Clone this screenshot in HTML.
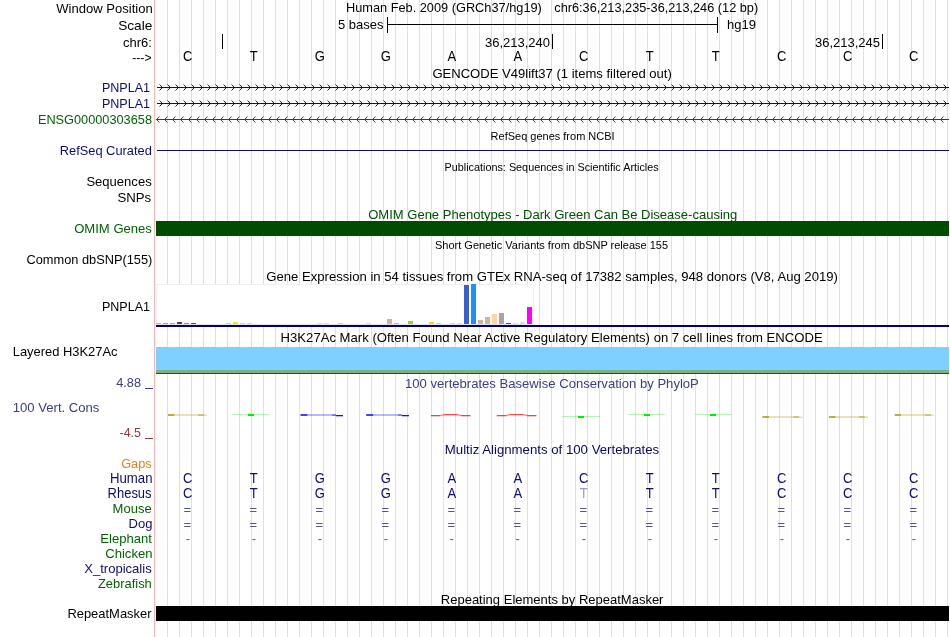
<!DOCTYPE html>
<html><head><meta charset="utf-8"><style>
html,body{margin:0;padding:0;background:#fff;width:950px;height:637px;overflow:hidden}
svg{display:block;will-change:transform;font-family:"Liberation Sans",sans-serif}
</style></head><body>
<svg width="950" height="637" viewBox="0 0 950 637">
<rect x="167" y="0" width="1" height="637" fill="#dcdcff"/>
<rect x="179" y="0" width="1" height="637" fill="#dcdcff"/>
<rect x="191" y="0" width="1" height="637" fill="#dcdcff"/>
<rect x="203" y="0" width="1" height="637" fill="#dcdcff"/>
<rect x="215" y="0" width="1" height="637" fill="#dcdcff"/>
<rect x="227" y="0" width="1" height="637" fill="#dcdcff"/>
<rect x="239" y="0" width="1" height="637" fill="#dcdcff"/>
<rect x="251" y="0" width="1" height="637" fill="#dcdcff"/>
<rect x="263" y="0" width="1" height="637" fill="#dcdcff"/>
<rect x="275" y="0" width="1" height="637" fill="#dcdcff"/>
<rect x="287" y="0" width="1" height="637" fill="#dcdcff"/>
<rect x="299" y="0" width="1" height="637" fill="#dcdcff"/>
<rect x="311" y="0" width="1" height="637" fill="#dcdcff"/>
<rect x="323" y="0" width="1" height="637" fill="#dcdcff"/>
<rect x="335" y="0" width="1" height="637" fill="#dcdcff"/>
<rect x="347" y="0" width="1" height="637" fill="#dcdcff"/>
<rect x="359" y="0" width="1" height="637" fill="#dcdcff"/>
<rect x="371" y="0" width="1" height="637" fill="#dcdcff"/>
<rect x="383" y="0" width="1" height="637" fill="#dcdcff"/>
<rect x="395" y="0" width="1" height="637" fill="#dcdcff"/>
<rect x="407" y="0" width="1" height="637" fill="#dcdcff"/>
<rect x="419" y="0" width="1" height="637" fill="#dcdcff"/>
<rect x="431" y="0" width="1" height="637" fill="#dcdcff"/>
<rect x="443" y="0" width="1" height="637" fill="#dcdcff"/>
<rect x="455" y="0" width="1" height="637" fill="#dcdcff"/>
<rect x="467" y="0" width="1" height="637" fill="#dcdcff"/>
<rect x="479" y="0" width="1" height="637" fill="#dcdcff"/>
<rect x="491" y="0" width="1" height="637" fill="#dcdcff"/>
<rect x="503" y="0" width="1" height="637" fill="#dcdcff"/>
<rect x="515" y="0" width="1" height="637" fill="#dcdcff"/>
<rect x="527" y="0" width="1" height="637" fill="#dcdcff"/>
<rect x="539" y="0" width="1" height="637" fill="#dcdcff"/>
<rect x="551" y="0" width="1" height="637" fill="#dcdcff"/>
<rect x="563" y="0" width="1" height="637" fill="#dcdcff"/>
<rect x="575" y="0" width="1" height="637" fill="#dcdcff"/>
<rect x="587" y="0" width="1" height="637" fill="#dcdcff"/>
<rect x="599" y="0" width="1" height="637" fill="#dcdcff"/>
<rect x="611" y="0" width="1" height="637" fill="#dcdcff"/>
<rect x="623" y="0" width="1" height="637" fill="#dcdcff"/>
<rect x="635" y="0" width="1" height="637" fill="#dcdcff"/>
<rect x="647" y="0" width="1" height="637" fill="#dcdcff"/>
<rect x="659" y="0" width="1" height="637" fill="#dcdcff"/>
<rect x="671" y="0" width="1" height="637" fill="#dcdcff"/>
<rect x="683" y="0" width="1" height="637" fill="#dcdcff"/>
<rect x="695" y="0" width="1" height="637" fill="#dcdcff"/>
<rect x="707" y="0" width="1" height="637" fill="#dcdcff"/>
<rect x="719" y="0" width="1" height="637" fill="#dcdcff"/>
<rect x="731" y="0" width="1" height="637" fill="#dcdcff"/>
<rect x="743" y="0" width="1" height="637" fill="#dcdcff"/>
<rect x="755" y="0" width="1" height="637" fill="#dcdcff"/>
<rect x="767" y="0" width="1" height="637" fill="#dcdcff"/>
<rect x="779" y="0" width="1" height="637" fill="#dcdcff"/>
<rect x="791" y="0" width="1" height="637" fill="#dcdcff"/>
<rect x="803" y="0" width="1" height="637" fill="#dcdcff"/>
<rect x="815" y="0" width="1" height="637" fill="#dcdcff"/>
<rect x="827" y="0" width="1" height="637" fill="#dcdcff"/>
<rect x="839" y="0" width="1" height="637" fill="#dcdcff"/>
<rect x="851" y="0" width="1" height="637" fill="#dcdcff"/>
<rect x="863" y="0" width="1" height="637" fill="#dcdcff"/>
<rect x="875" y="0" width="1" height="637" fill="#dcdcff"/>
<rect x="887" y="0" width="1" height="637" fill="#dcdcff"/>
<rect x="899" y="0" width="1" height="637" fill="#dcdcff"/>
<rect x="911" y="0" width="1" height="637" fill="#dcdcff"/>
<rect x="923" y="0" width="1" height="637" fill="#dcdcff"/>
<rect x="935" y="0" width="1" height="637" fill="#dcdcff"/>
<rect x="947" y="0" width="1" height="637" fill="#dcdcff"/>
<rect x="154" y="0" width="1" height="637" fill="#ffb4b4"/>
<rect x="145" y="388" width="8" height="1" fill="rgb(60,60,140)"/>
<rect x="145" y="438" width="8" height="1" fill="rgb(140,60,60)"/>
<text x="338" y="29" fill="#000" font-size="13" text-anchor="start">5 bases</text>
<rect x="387" y="17" width="1" height="16" fill="#000"/>
<rect x="387" y="24" width="331" height="1" fill="#000"/>
<rect x="717" y="17" width="1" height="16" fill="#000"/>
<text x="727" y="29" fill="#000" font-size="13" text-anchor="start">hg19</text>
<rect x="222" y="34" width="1" height="15" fill="#000"/>
<rect x="552" y="34" width="1" height="15" fill="#000"/>
<rect x="882" y="34" width="1" height="15" fill="#000"/>
<text x="550" y="47" fill="#000" font-size="13" text-anchor="end">36,213,240</text>
<text x="880" y="47" fill="#000" font-size="13" text-anchor="end">36,213,245</text>
<text x="187.8" y="61" fill="#000" font-size="13" text-anchor="middle" transform="matrix(1,0,0,1.1,0,-6.100)">C</text>
<text x="253.8" y="61" fill="#000" font-size="13" text-anchor="middle" transform="matrix(1,0,0,1.1,0,-6.100)">T</text>
<text x="319.8" y="61" fill="#000" font-size="13" text-anchor="middle" transform="matrix(1,0,0,1.1,0,-6.100)">G</text>
<text x="385.8" y="61" fill="#000" font-size="13" text-anchor="middle" transform="matrix(1,0,0,1.1,0,-6.100)">G</text>
<text x="451.8" y="61" fill="#000" font-size="13" text-anchor="middle" transform="matrix(1,0,0,1.1,0,-6.100)">A</text>
<text x="517.8" y="61" fill="#000" font-size="13" text-anchor="middle" transform="matrix(1,0,0,1.1,0,-6.100)">A</text>
<text x="583.8" y="61" fill="#000" font-size="13" text-anchor="middle" transform="matrix(1,0,0,1.1,0,-6.100)">C</text>
<text x="649.8" y="61" fill="#000" font-size="13" text-anchor="middle" transform="matrix(1,0,0,1.1,0,-6.100)">T</text>
<text x="715.8" y="61" fill="#000" font-size="13" text-anchor="middle" transform="matrix(1,0,0,1.1,0,-6.100)">T</text>
<text x="781.8" y="61" fill="#000" font-size="13" text-anchor="middle" transform="matrix(1,0,0,1.1,0,-6.100)">C</text>
<text x="847.8" y="61" fill="#000" font-size="13" text-anchor="middle" transform="matrix(1,0,0,1.1,0,-6.100)">C</text>
<text x="913.8" y="61" fill="#000" font-size="13" text-anchor="middle" transform="matrix(1,0,0,1.1,0,-6.100)">C</text>
<rect x="157" y="87" width="792" height="1" fill="rgb(12,12,120)"/>
<path d="M161,86h1v1h-1zM160,85h1v1h-1zM161,88h1v1h-1zM160,89h1v1h-1zM169,86h1v1h-1zM168,85h1v1h-1zM169,88h1v1h-1zM168,89h1v1h-1zM177,86h1v1h-1zM176,85h1v1h-1zM177,88h1v1h-1zM176,89h1v1h-1zM185,86h1v1h-1zM184,85h1v1h-1zM185,88h1v1h-1zM184,89h1v1h-1zM193,86h1v1h-1zM192,85h1v1h-1zM193,88h1v1h-1zM192,89h1v1h-1zM201,86h1v1h-1zM200,85h1v1h-1zM201,88h1v1h-1zM200,89h1v1h-1zM209,86h1v1h-1zM208,85h1v1h-1zM209,88h1v1h-1zM208,89h1v1h-1zM217,86h1v1h-1zM216,85h1v1h-1zM217,88h1v1h-1zM216,89h1v1h-1zM225,86h1v1h-1zM224,85h1v1h-1zM225,88h1v1h-1zM224,89h1v1h-1zM233,86h1v1h-1zM232,85h1v1h-1zM233,88h1v1h-1zM232,89h1v1h-1zM241,86h1v1h-1zM240,85h1v1h-1zM241,88h1v1h-1zM240,89h1v1h-1zM249,86h1v1h-1zM248,85h1v1h-1zM249,88h1v1h-1zM248,89h1v1h-1zM257,86h1v1h-1zM256,85h1v1h-1zM257,88h1v1h-1zM256,89h1v1h-1zM265,86h1v1h-1zM264,85h1v1h-1zM265,88h1v1h-1zM264,89h1v1h-1zM273,86h1v1h-1zM272,85h1v1h-1zM273,88h1v1h-1zM272,89h1v1h-1zM281,86h1v1h-1zM280,85h1v1h-1zM281,88h1v1h-1zM280,89h1v1h-1zM289,86h1v1h-1zM288,85h1v1h-1zM289,88h1v1h-1zM288,89h1v1h-1zM297,86h1v1h-1zM296,85h1v1h-1zM297,88h1v1h-1zM296,89h1v1h-1zM305,86h1v1h-1zM304,85h1v1h-1zM305,88h1v1h-1zM304,89h1v1h-1zM313,86h1v1h-1zM312,85h1v1h-1zM313,88h1v1h-1zM312,89h1v1h-1zM321,86h1v1h-1zM320,85h1v1h-1zM321,88h1v1h-1zM320,89h1v1h-1zM329,86h1v1h-1zM328,85h1v1h-1zM329,88h1v1h-1zM328,89h1v1h-1zM337,86h1v1h-1zM336,85h1v1h-1zM337,88h1v1h-1zM336,89h1v1h-1zM345,86h1v1h-1zM344,85h1v1h-1zM345,88h1v1h-1zM344,89h1v1h-1zM353,86h1v1h-1zM352,85h1v1h-1zM353,88h1v1h-1zM352,89h1v1h-1zM361,86h1v1h-1zM360,85h1v1h-1zM361,88h1v1h-1zM360,89h1v1h-1zM369,86h1v1h-1zM368,85h1v1h-1zM369,88h1v1h-1zM368,89h1v1h-1zM377,86h1v1h-1zM376,85h1v1h-1zM377,88h1v1h-1zM376,89h1v1h-1zM385,86h1v1h-1zM384,85h1v1h-1zM385,88h1v1h-1zM384,89h1v1h-1zM393,86h1v1h-1zM392,85h1v1h-1zM393,88h1v1h-1zM392,89h1v1h-1zM401,86h1v1h-1zM400,85h1v1h-1zM401,88h1v1h-1zM400,89h1v1h-1zM409,86h1v1h-1zM408,85h1v1h-1zM409,88h1v1h-1zM408,89h1v1h-1zM417,86h1v1h-1zM416,85h1v1h-1zM417,88h1v1h-1zM416,89h1v1h-1zM425,86h1v1h-1zM424,85h1v1h-1zM425,88h1v1h-1zM424,89h1v1h-1zM433,86h1v1h-1zM432,85h1v1h-1zM433,88h1v1h-1zM432,89h1v1h-1zM441,86h1v1h-1zM440,85h1v1h-1zM441,88h1v1h-1zM440,89h1v1h-1zM449,86h1v1h-1zM448,85h1v1h-1zM449,88h1v1h-1zM448,89h1v1h-1zM457,86h1v1h-1zM456,85h1v1h-1zM457,88h1v1h-1zM456,89h1v1h-1zM465,86h1v1h-1zM464,85h1v1h-1zM465,88h1v1h-1zM464,89h1v1h-1zM473,86h1v1h-1zM472,85h1v1h-1zM473,88h1v1h-1zM472,89h1v1h-1zM481,86h1v1h-1zM480,85h1v1h-1zM481,88h1v1h-1zM480,89h1v1h-1zM489,86h1v1h-1zM488,85h1v1h-1zM489,88h1v1h-1zM488,89h1v1h-1zM497,86h1v1h-1zM496,85h1v1h-1zM497,88h1v1h-1zM496,89h1v1h-1zM505,86h1v1h-1zM504,85h1v1h-1zM505,88h1v1h-1zM504,89h1v1h-1zM513,86h1v1h-1zM512,85h1v1h-1zM513,88h1v1h-1zM512,89h1v1h-1zM521,86h1v1h-1zM520,85h1v1h-1zM521,88h1v1h-1zM520,89h1v1h-1zM529,86h1v1h-1zM528,85h1v1h-1zM529,88h1v1h-1zM528,89h1v1h-1zM537,86h1v1h-1zM536,85h1v1h-1zM537,88h1v1h-1zM536,89h1v1h-1zM545,86h1v1h-1zM544,85h1v1h-1zM545,88h1v1h-1zM544,89h1v1h-1zM553,86h1v1h-1zM552,85h1v1h-1zM553,88h1v1h-1zM552,89h1v1h-1zM561,86h1v1h-1zM560,85h1v1h-1zM561,88h1v1h-1zM560,89h1v1h-1zM569,86h1v1h-1zM568,85h1v1h-1zM569,88h1v1h-1zM568,89h1v1h-1zM577,86h1v1h-1zM576,85h1v1h-1zM577,88h1v1h-1zM576,89h1v1h-1zM585,86h1v1h-1zM584,85h1v1h-1zM585,88h1v1h-1zM584,89h1v1h-1zM593,86h1v1h-1zM592,85h1v1h-1zM593,88h1v1h-1zM592,89h1v1h-1zM601,86h1v1h-1zM600,85h1v1h-1zM601,88h1v1h-1zM600,89h1v1h-1zM609,86h1v1h-1zM608,85h1v1h-1zM609,88h1v1h-1zM608,89h1v1h-1zM617,86h1v1h-1zM616,85h1v1h-1zM617,88h1v1h-1zM616,89h1v1h-1zM625,86h1v1h-1zM624,85h1v1h-1zM625,88h1v1h-1zM624,89h1v1h-1zM633,86h1v1h-1zM632,85h1v1h-1zM633,88h1v1h-1zM632,89h1v1h-1zM641,86h1v1h-1zM640,85h1v1h-1zM641,88h1v1h-1zM640,89h1v1h-1zM649,86h1v1h-1zM648,85h1v1h-1zM649,88h1v1h-1zM648,89h1v1h-1zM657,86h1v1h-1zM656,85h1v1h-1zM657,88h1v1h-1zM656,89h1v1h-1zM665,86h1v1h-1zM664,85h1v1h-1zM665,88h1v1h-1zM664,89h1v1h-1zM673,86h1v1h-1zM672,85h1v1h-1zM673,88h1v1h-1zM672,89h1v1h-1zM681,86h1v1h-1zM680,85h1v1h-1zM681,88h1v1h-1zM680,89h1v1h-1zM689,86h1v1h-1zM688,85h1v1h-1zM689,88h1v1h-1zM688,89h1v1h-1zM697,86h1v1h-1zM696,85h1v1h-1zM697,88h1v1h-1zM696,89h1v1h-1zM705,86h1v1h-1zM704,85h1v1h-1zM705,88h1v1h-1zM704,89h1v1h-1zM713,86h1v1h-1zM712,85h1v1h-1zM713,88h1v1h-1zM712,89h1v1h-1zM721,86h1v1h-1zM720,85h1v1h-1zM721,88h1v1h-1zM720,89h1v1h-1zM729,86h1v1h-1zM728,85h1v1h-1zM729,88h1v1h-1zM728,89h1v1h-1zM737,86h1v1h-1zM736,85h1v1h-1zM737,88h1v1h-1zM736,89h1v1h-1zM745,86h1v1h-1zM744,85h1v1h-1zM745,88h1v1h-1zM744,89h1v1h-1zM753,86h1v1h-1zM752,85h1v1h-1zM753,88h1v1h-1zM752,89h1v1h-1zM761,86h1v1h-1zM760,85h1v1h-1zM761,88h1v1h-1zM760,89h1v1h-1zM769,86h1v1h-1zM768,85h1v1h-1zM769,88h1v1h-1zM768,89h1v1h-1zM777,86h1v1h-1zM776,85h1v1h-1zM777,88h1v1h-1zM776,89h1v1h-1zM785,86h1v1h-1zM784,85h1v1h-1zM785,88h1v1h-1zM784,89h1v1h-1zM793,86h1v1h-1zM792,85h1v1h-1zM793,88h1v1h-1zM792,89h1v1h-1zM801,86h1v1h-1zM800,85h1v1h-1zM801,88h1v1h-1zM800,89h1v1h-1zM809,86h1v1h-1zM808,85h1v1h-1zM809,88h1v1h-1zM808,89h1v1h-1zM817,86h1v1h-1zM816,85h1v1h-1zM817,88h1v1h-1zM816,89h1v1h-1zM825,86h1v1h-1zM824,85h1v1h-1zM825,88h1v1h-1zM824,89h1v1h-1zM833,86h1v1h-1zM832,85h1v1h-1zM833,88h1v1h-1zM832,89h1v1h-1zM841,86h1v1h-1zM840,85h1v1h-1zM841,88h1v1h-1zM840,89h1v1h-1zM849,86h1v1h-1zM848,85h1v1h-1zM849,88h1v1h-1zM848,89h1v1h-1zM857,86h1v1h-1zM856,85h1v1h-1zM857,88h1v1h-1zM856,89h1v1h-1zM865,86h1v1h-1zM864,85h1v1h-1zM865,88h1v1h-1zM864,89h1v1h-1zM873,86h1v1h-1zM872,85h1v1h-1zM873,88h1v1h-1zM872,89h1v1h-1zM881,86h1v1h-1zM880,85h1v1h-1zM881,88h1v1h-1zM880,89h1v1h-1zM889,86h1v1h-1zM888,85h1v1h-1zM889,88h1v1h-1zM888,89h1v1h-1zM897,86h1v1h-1zM896,85h1v1h-1zM897,88h1v1h-1zM896,89h1v1h-1zM905,86h1v1h-1zM904,85h1v1h-1zM905,88h1v1h-1zM904,89h1v1h-1zM913,86h1v1h-1zM912,85h1v1h-1zM913,88h1v1h-1zM912,89h1v1h-1zM921,86h1v1h-1zM920,85h1v1h-1zM921,88h1v1h-1zM920,89h1v1h-1zM929,86h1v1h-1zM928,85h1v1h-1zM929,88h1v1h-1zM928,89h1v1h-1zM937,86h1v1h-1zM936,85h1v1h-1zM937,88h1v1h-1zM936,89h1v1h-1zM945,86h1v1h-1zM944,85h1v1h-1zM945,88h1v1h-1zM944,89h1v1h-1z" fill="rgb(12,12,120)"/>
<path d="M159,84h1v1h-1zM159,90h1v1h-1zM167,84h1v1h-1zM167,90h1v1h-1zM175,84h1v1h-1zM175,90h1v1h-1zM183,84h1v1h-1zM183,90h1v1h-1zM191,84h1v1h-1zM191,90h1v1h-1zM199,84h1v1h-1zM199,90h1v1h-1zM207,84h1v1h-1zM207,90h1v1h-1zM215,84h1v1h-1zM215,90h1v1h-1zM223,84h1v1h-1zM223,90h1v1h-1zM231,84h1v1h-1zM231,90h1v1h-1zM239,84h1v1h-1zM239,90h1v1h-1zM247,84h1v1h-1zM247,90h1v1h-1zM255,84h1v1h-1zM255,90h1v1h-1zM263,84h1v1h-1zM263,90h1v1h-1zM271,84h1v1h-1zM271,90h1v1h-1zM279,84h1v1h-1zM279,90h1v1h-1zM287,84h1v1h-1zM287,90h1v1h-1zM295,84h1v1h-1zM295,90h1v1h-1zM303,84h1v1h-1zM303,90h1v1h-1zM311,84h1v1h-1zM311,90h1v1h-1zM319,84h1v1h-1zM319,90h1v1h-1zM327,84h1v1h-1zM327,90h1v1h-1zM335,84h1v1h-1zM335,90h1v1h-1zM343,84h1v1h-1zM343,90h1v1h-1zM351,84h1v1h-1zM351,90h1v1h-1zM359,84h1v1h-1zM359,90h1v1h-1zM367,84h1v1h-1zM367,90h1v1h-1zM375,84h1v1h-1zM375,90h1v1h-1zM383,84h1v1h-1zM383,90h1v1h-1zM391,84h1v1h-1zM391,90h1v1h-1zM399,84h1v1h-1zM399,90h1v1h-1zM407,84h1v1h-1zM407,90h1v1h-1zM415,84h1v1h-1zM415,90h1v1h-1zM423,84h1v1h-1zM423,90h1v1h-1zM431,84h1v1h-1zM431,90h1v1h-1zM439,84h1v1h-1zM439,90h1v1h-1zM447,84h1v1h-1zM447,90h1v1h-1zM455,84h1v1h-1zM455,90h1v1h-1zM463,84h1v1h-1zM463,90h1v1h-1zM471,84h1v1h-1zM471,90h1v1h-1zM479,84h1v1h-1zM479,90h1v1h-1zM487,84h1v1h-1zM487,90h1v1h-1zM495,84h1v1h-1zM495,90h1v1h-1zM503,84h1v1h-1zM503,90h1v1h-1zM511,84h1v1h-1zM511,90h1v1h-1zM519,84h1v1h-1zM519,90h1v1h-1zM527,84h1v1h-1zM527,90h1v1h-1zM535,84h1v1h-1zM535,90h1v1h-1zM543,84h1v1h-1zM543,90h1v1h-1zM551,84h1v1h-1zM551,90h1v1h-1zM559,84h1v1h-1zM559,90h1v1h-1zM567,84h1v1h-1zM567,90h1v1h-1zM575,84h1v1h-1zM575,90h1v1h-1zM583,84h1v1h-1zM583,90h1v1h-1zM591,84h1v1h-1zM591,90h1v1h-1zM599,84h1v1h-1zM599,90h1v1h-1zM607,84h1v1h-1zM607,90h1v1h-1zM615,84h1v1h-1zM615,90h1v1h-1zM623,84h1v1h-1zM623,90h1v1h-1zM631,84h1v1h-1zM631,90h1v1h-1zM639,84h1v1h-1zM639,90h1v1h-1zM647,84h1v1h-1zM647,90h1v1h-1zM655,84h1v1h-1zM655,90h1v1h-1zM663,84h1v1h-1zM663,90h1v1h-1zM671,84h1v1h-1zM671,90h1v1h-1zM679,84h1v1h-1zM679,90h1v1h-1zM687,84h1v1h-1zM687,90h1v1h-1zM695,84h1v1h-1zM695,90h1v1h-1zM703,84h1v1h-1zM703,90h1v1h-1zM711,84h1v1h-1zM711,90h1v1h-1zM719,84h1v1h-1zM719,90h1v1h-1zM727,84h1v1h-1zM727,90h1v1h-1zM735,84h1v1h-1zM735,90h1v1h-1zM743,84h1v1h-1zM743,90h1v1h-1zM751,84h1v1h-1zM751,90h1v1h-1zM759,84h1v1h-1zM759,90h1v1h-1zM767,84h1v1h-1zM767,90h1v1h-1zM775,84h1v1h-1zM775,90h1v1h-1zM783,84h1v1h-1zM783,90h1v1h-1zM791,84h1v1h-1zM791,90h1v1h-1zM799,84h1v1h-1zM799,90h1v1h-1zM807,84h1v1h-1zM807,90h1v1h-1zM815,84h1v1h-1zM815,90h1v1h-1zM823,84h1v1h-1zM823,90h1v1h-1zM831,84h1v1h-1zM831,90h1v1h-1zM839,84h1v1h-1zM839,90h1v1h-1zM847,84h1v1h-1zM847,90h1v1h-1zM855,84h1v1h-1zM855,90h1v1h-1zM863,84h1v1h-1zM863,90h1v1h-1zM871,84h1v1h-1zM871,90h1v1h-1zM879,84h1v1h-1zM879,90h1v1h-1zM887,84h1v1h-1zM887,90h1v1h-1zM895,84h1v1h-1zM895,90h1v1h-1zM903,84h1v1h-1zM903,90h1v1h-1zM911,84h1v1h-1zM911,90h1v1h-1zM919,84h1v1h-1zM919,90h1v1h-1zM927,84h1v1h-1zM927,90h1v1h-1zM935,84h1v1h-1zM935,90h1v1h-1zM943,84h1v1h-1zM943,90h1v1h-1z" fill="rgb(12,12,120)" fill-opacity="0.45"/>
<rect x="157" y="103" width="792" height="1" fill="rgb(12,12,120)"/>
<path d="M161,102h1v1h-1zM160,101h1v1h-1zM161,104h1v1h-1zM160,105h1v1h-1zM169,102h1v1h-1zM168,101h1v1h-1zM169,104h1v1h-1zM168,105h1v1h-1zM177,102h1v1h-1zM176,101h1v1h-1zM177,104h1v1h-1zM176,105h1v1h-1zM185,102h1v1h-1zM184,101h1v1h-1zM185,104h1v1h-1zM184,105h1v1h-1zM193,102h1v1h-1zM192,101h1v1h-1zM193,104h1v1h-1zM192,105h1v1h-1zM201,102h1v1h-1zM200,101h1v1h-1zM201,104h1v1h-1zM200,105h1v1h-1zM209,102h1v1h-1zM208,101h1v1h-1zM209,104h1v1h-1zM208,105h1v1h-1zM217,102h1v1h-1zM216,101h1v1h-1zM217,104h1v1h-1zM216,105h1v1h-1zM225,102h1v1h-1zM224,101h1v1h-1zM225,104h1v1h-1zM224,105h1v1h-1zM233,102h1v1h-1zM232,101h1v1h-1zM233,104h1v1h-1zM232,105h1v1h-1zM241,102h1v1h-1zM240,101h1v1h-1zM241,104h1v1h-1zM240,105h1v1h-1zM249,102h1v1h-1zM248,101h1v1h-1zM249,104h1v1h-1zM248,105h1v1h-1zM257,102h1v1h-1zM256,101h1v1h-1zM257,104h1v1h-1zM256,105h1v1h-1zM265,102h1v1h-1zM264,101h1v1h-1zM265,104h1v1h-1zM264,105h1v1h-1zM273,102h1v1h-1zM272,101h1v1h-1zM273,104h1v1h-1zM272,105h1v1h-1zM281,102h1v1h-1zM280,101h1v1h-1zM281,104h1v1h-1zM280,105h1v1h-1zM289,102h1v1h-1zM288,101h1v1h-1zM289,104h1v1h-1zM288,105h1v1h-1zM297,102h1v1h-1zM296,101h1v1h-1zM297,104h1v1h-1zM296,105h1v1h-1zM305,102h1v1h-1zM304,101h1v1h-1zM305,104h1v1h-1zM304,105h1v1h-1zM313,102h1v1h-1zM312,101h1v1h-1zM313,104h1v1h-1zM312,105h1v1h-1zM321,102h1v1h-1zM320,101h1v1h-1zM321,104h1v1h-1zM320,105h1v1h-1zM329,102h1v1h-1zM328,101h1v1h-1zM329,104h1v1h-1zM328,105h1v1h-1zM337,102h1v1h-1zM336,101h1v1h-1zM337,104h1v1h-1zM336,105h1v1h-1zM345,102h1v1h-1zM344,101h1v1h-1zM345,104h1v1h-1zM344,105h1v1h-1zM353,102h1v1h-1zM352,101h1v1h-1zM353,104h1v1h-1zM352,105h1v1h-1zM361,102h1v1h-1zM360,101h1v1h-1zM361,104h1v1h-1zM360,105h1v1h-1zM369,102h1v1h-1zM368,101h1v1h-1zM369,104h1v1h-1zM368,105h1v1h-1zM377,102h1v1h-1zM376,101h1v1h-1zM377,104h1v1h-1zM376,105h1v1h-1zM385,102h1v1h-1zM384,101h1v1h-1zM385,104h1v1h-1zM384,105h1v1h-1zM393,102h1v1h-1zM392,101h1v1h-1zM393,104h1v1h-1zM392,105h1v1h-1zM401,102h1v1h-1zM400,101h1v1h-1zM401,104h1v1h-1zM400,105h1v1h-1zM409,102h1v1h-1zM408,101h1v1h-1zM409,104h1v1h-1zM408,105h1v1h-1zM417,102h1v1h-1zM416,101h1v1h-1zM417,104h1v1h-1zM416,105h1v1h-1zM425,102h1v1h-1zM424,101h1v1h-1zM425,104h1v1h-1zM424,105h1v1h-1zM433,102h1v1h-1zM432,101h1v1h-1zM433,104h1v1h-1zM432,105h1v1h-1zM441,102h1v1h-1zM440,101h1v1h-1zM441,104h1v1h-1zM440,105h1v1h-1zM449,102h1v1h-1zM448,101h1v1h-1zM449,104h1v1h-1zM448,105h1v1h-1zM457,102h1v1h-1zM456,101h1v1h-1zM457,104h1v1h-1zM456,105h1v1h-1zM465,102h1v1h-1zM464,101h1v1h-1zM465,104h1v1h-1zM464,105h1v1h-1zM473,102h1v1h-1zM472,101h1v1h-1zM473,104h1v1h-1zM472,105h1v1h-1zM481,102h1v1h-1zM480,101h1v1h-1zM481,104h1v1h-1zM480,105h1v1h-1zM489,102h1v1h-1zM488,101h1v1h-1zM489,104h1v1h-1zM488,105h1v1h-1zM497,102h1v1h-1zM496,101h1v1h-1zM497,104h1v1h-1zM496,105h1v1h-1zM505,102h1v1h-1zM504,101h1v1h-1zM505,104h1v1h-1zM504,105h1v1h-1zM513,102h1v1h-1zM512,101h1v1h-1zM513,104h1v1h-1zM512,105h1v1h-1zM521,102h1v1h-1zM520,101h1v1h-1zM521,104h1v1h-1zM520,105h1v1h-1zM529,102h1v1h-1zM528,101h1v1h-1zM529,104h1v1h-1zM528,105h1v1h-1zM537,102h1v1h-1zM536,101h1v1h-1zM537,104h1v1h-1zM536,105h1v1h-1zM545,102h1v1h-1zM544,101h1v1h-1zM545,104h1v1h-1zM544,105h1v1h-1zM553,102h1v1h-1zM552,101h1v1h-1zM553,104h1v1h-1zM552,105h1v1h-1zM561,102h1v1h-1zM560,101h1v1h-1zM561,104h1v1h-1zM560,105h1v1h-1zM569,102h1v1h-1zM568,101h1v1h-1zM569,104h1v1h-1zM568,105h1v1h-1zM577,102h1v1h-1zM576,101h1v1h-1zM577,104h1v1h-1zM576,105h1v1h-1zM585,102h1v1h-1zM584,101h1v1h-1zM585,104h1v1h-1zM584,105h1v1h-1zM593,102h1v1h-1zM592,101h1v1h-1zM593,104h1v1h-1zM592,105h1v1h-1zM601,102h1v1h-1zM600,101h1v1h-1zM601,104h1v1h-1zM600,105h1v1h-1zM609,102h1v1h-1zM608,101h1v1h-1zM609,104h1v1h-1zM608,105h1v1h-1zM617,102h1v1h-1zM616,101h1v1h-1zM617,104h1v1h-1zM616,105h1v1h-1zM625,102h1v1h-1zM624,101h1v1h-1zM625,104h1v1h-1zM624,105h1v1h-1zM633,102h1v1h-1zM632,101h1v1h-1zM633,104h1v1h-1zM632,105h1v1h-1zM641,102h1v1h-1zM640,101h1v1h-1zM641,104h1v1h-1zM640,105h1v1h-1zM649,102h1v1h-1zM648,101h1v1h-1zM649,104h1v1h-1zM648,105h1v1h-1zM657,102h1v1h-1zM656,101h1v1h-1zM657,104h1v1h-1zM656,105h1v1h-1zM665,102h1v1h-1zM664,101h1v1h-1zM665,104h1v1h-1zM664,105h1v1h-1zM673,102h1v1h-1zM672,101h1v1h-1zM673,104h1v1h-1zM672,105h1v1h-1zM681,102h1v1h-1zM680,101h1v1h-1zM681,104h1v1h-1zM680,105h1v1h-1zM689,102h1v1h-1zM688,101h1v1h-1zM689,104h1v1h-1zM688,105h1v1h-1zM697,102h1v1h-1zM696,101h1v1h-1zM697,104h1v1h-1zM696,105h1v1h-1zM705,102h1v1h-1zM704,101h1v1h-1zM705,104h1v1h-1zM704,105h1v1h-1zM713,102h1v1h-1zM712,101h1v1h-1zM713,104h1v1h-1zM712,105h1v1h-1zM721,102h1v1h-1zM720,101h1v1h-1zM721,104h1v1h-1zM720,105h1v1h-1zM729,102h1v1h-1zM728,101h1v1h-1zM729,104h1v1h-1zM728,105h1v1h-1zM737,102h1v1h-1zM736,101h1v1h-1zM737,104h1v1h-1zM736,105h1v1h-1zM745,102h1v1h-1zM744,101h1v1h-1zM745,104h1v1h-1zM744,105h1v1h-1zM753,102h1v1h-1zM752,101h1v1h-1zM753,104h1v1h-1zM752,105h1v1h-1zM761,102h1v1h-1zM760,101h1v1h-1zM761,104h1v1h-1zM760,105h1v1h-1zM769,102h1v1h-1zM768,101h1v1h-1zM769,104h1v1h-1zM768,105h1v1h-1zM777,102h1v1h-1zM776,101h1v1h-1zM777,104h1v1h-1zM776,105h1v1h-1zM785,102h1v1h-1zM784,101h1v1h-1zM785,104h1v1h-1zM784,105h1v1h-1zM793,102h1v1h-1zM792,101h1v1h-1zM793,104h1v1h-1zM792,105h1v1h-1zM801,102h1v1h-1zM800,101h1v1h-1zM801,104h1v1h-1zM800,105h1v1h-1zM809,102h1v1h-1zM808,101h1v1h-1zM809,104h1v1h-1zM808,105h1v1h-1zM817,102h1v1h-1zM816,101h1v1h-1zM817,104h1v1h-1zM816,105h1v1h-1zM825,102h1v1h-1zM824,101h1v1h-1zM825,104h1v1h-1zM824,105h1v1h-1zM833,102h1v1h-1zM832,101h1v1h-1zM833,104h1v1h-1zM832,105h1v1h-1zM841,102h1v1h-1zM840,101h1v1h-1zM841,104h1v1h-1zM840,105h1v1h-1zM849,102h1v1h-1zM848,101h1v1h-1zM849,104h1v1h-1zM848,105h1v1h-1zM857,102h1v1h-1zM856,101h1v1h-1zM857,104h1v1h-1zM856,105h1v1h-1zM865,102h1v1h-1zM864,101h1v1h-1zM865,104h1v1h-1zM864,105h1v1h-1zM873,102h1v1h-1zM872,101h1v1h-1zM873,104h1v1h-1zM872,105h1v1h-1zM881,102h1v1h-1zM880,101h1v1h-1zM881,104h1v1h-1zM880,105h1v1h-1zM889,102h1v1h-1zM888,101h1v1h-1zM889,104h1v1h-1zM888,105h1v1h-1zM897,102h1v1h-1zM896,101h1v1h-1zM897,104h1v1h-1zM896,105h1v1h-1zM905,102h1v1h-1zM904,101h1v1h-1zM905,104h1v1h-1zM904,105h1v1h-1zM913,102h1v1h-1zM912,101h1v1h-1zM913,104h1v1h-1zM912,105h1v1h-1zM921,102h1v1h-1zM920,101h1v1h-1zM921,104h1v1h-1zM920,105h1v1h-1zM929,102h1v1h-1zM928,101h1v1h-1zM929,104h1v1h-1zM928,105h1v1h-1zM937,102h1v1h-1zM936,101h1v1h-1zM937,104h1v1h-1zM936,105h1v1h-1zM945,102h1v1h-1zM944,101h1v1h-1zM945,104h1v1h-1zM944,105h1v1h-1z" fill="rgb(12,12,120)"/>
<path d="M159,100h1v1h-1zM159,106h1v1h-1zM167,100h1v1h-1zM167,106h1v1h-1zM175,100h1v1h-1zM175,106h1v1h-1zM183,100h1v1h-1zM183,106h1v1h-1zM191,100h1v1h-1zM191,106h1v1h-1zM199,100h1v1h-1zM199,106h1v1h-1zM207,100h1v1h-1zM207,106h1v1h-1zM215,100h1v1h-1zM215,106h1v1h-1zM223,100h1v1h-1zM223,106h1v1h-1zM231,100h1v1h-1zM231,106h1v1h-1zM239,100h1v1h-1zM239,106h1v1h-1zM247,100h1v1h-1zM247,106h1v1h-1zM255,100h1v1h-1zM255,106h1v1h-1zM263,100h1v1h-1zM263,106h1v1h-1zM271,100h1v1h-1zM271,106h1v1h-1zM279,100h1v1h-1zM279,106h1v1h-1zM287,100h1v1h-1zM287,106h1v1h-1zM295,100h1v1h-1zM295,106h1v1h-1zM303,100h1v1h-1zM303,106h1v1h-1zM311,100h1v1h-1zM311,106h1v1h-1zM319,100h1v1h-1zM319,106h1v1h-1zM327,100h1v1h-1zM327,106h1v1h-1zM335,100h1v1h-1zM335,106h1v1h-1zM343,100h1v1h-1zM343,106h1v1h-1zM351,100h1v1h-1zM351,106h1v1h-1zM359,100h1v1h-1zM359,106h1v1h-1zM367,100h1v1h-1zM367,106h1v1h-1zM375,100h1v1h-1zM375,106h1v1h-1zM383,100h1v1h-1zM383,106h1v1h-1zM391,100h1v1h-1zM391,106h1v1h-1zM399,100h1v1h-1zM399,106h1v1h-1zM407,100h1v1h-1zM407,106h1v1h-1zM415,100h1v1h-1zM415,106h1v1h-1zM423,100h1v1h-1zM423,106h1v1h-1zM431,100h1v1h-1zM431,106h1v1h-1zM439,100h1v1h-1zM439,106h1v1h-1zM447,100h1v1h-1zM447,106h1v1h-1zM455,100h1v1h-1zM455,106h1v1h-1zM463,100h1v1h-1zM463,106h1v1h-1zM471,100h1v1h-1zM471,106h1v1h-1zM479,100h1v1h-1zM479,106h1v1h-1zM487,100h1v1h-1zM487,106h1v1h-1zM495,100h1v1h-1zM495,106h1v1h-1zM503,100h1v1h-1zM503,106h1v1h-1zM511,100h1v1h-1zM511,106h1v1h-1zM519,100h1v1h-1zM519,106h1v1h-1zM527,100h1v1h-1zM527,106h1v1h-1zM535,100h1v1h-1zM535,106h1v1h-1zM543,100h1v1h-1zM543,106h1v1h-1zM551,100h1v1h-1zM551,106h1v1h-1zM559,100h1v1h-1zM559,106h1v1h-1zM567,100h1v1h-1zM567,106h1v1h-1zM575,100h1v1h-1zM575,106h1v1h-1zM583,100h1v1h-1zM583,106h1v1h-1zM591,100h1v1h-1zM591,106h1v1h-1zM599,100h1v1h-1zM599,106h1v1h-1zM607,100h1v1h-1zM607,106h1v1h-1zM615,100h1v1h-1zM615,106h1v1h-1zM623,100h1v1h-1zM623,106h1v1h-1zM631,100h1v1h-1zM631,106h1v1h-1zM639,100h1v1h-1zM639,106h1v1h-1zM647,100h1v1h-1zM647,106h1v1h-1zM655,100h1v1h-1zM655,106h1v1h-1zM663,100h1v1h-1zM663,106h1v1h-1zM671,100h1v1h-1zM671,106h1v1h-1zM679,100h1v1h-1zM679,106h1v1h-1zM687,100h1v1h-1zM687,106h1v1h-1zM695,100h1v1h-1zM695,106h1v1h-1zM703,100h1v1h-1zM703,106h1v1h-1zM711,100h1v1h-1zM711,106h1v1h-1zM719,100h1v1h-1zM719,106h1v1h-1zM727,100h1v1h-1zM727,106h1v1h-1zM735,100h1v1h-1zM735,106h1v1h-1zM743,100h1v1h-1zM743,106h1v1h-1zM751,100h1v1h-1zM751,106h1v1h-1zM759,100h1v1h-1zM759,106h1v1h-1zM767,100h1v1h-1zM767,106h1v1h-1zM775,100h1v1h-1zM775,106h1v1h-1zM783,100h1v1h-1zM783,106h1v1h-1zM791,100h1v1h-1zM791,106h1v1h-1zM799,100h1v1h-1zM799,106h1v1h-1zM807,100h1v1h-1zM807,106h1v1h-1zM815,100h1v1h-1zM815,106h1v1h-1zM823,100h1v1h-1zM823,106h1v1h-1zM831,100h1v1h-1zM831,106h1v1h-1zM839,100h1v1h-1zM839,106h1v1h-1zM847,100h1v1h-1zM847,106h1v1h-1zM855,100h1v1h-1zM855,106h1v1h-1zM863,100h1v1h-1zM863,106h1v1h-1zM871,100h1v1h-1zM871,106h1v1h-1zM879,100h1v1h-1zM879,106h1v1h-1zM887,100h1v1h-1zM887,106h1v1h-1zM895,100h1v1h-1zM895,106h1v1h-1zM903,100h1v1h-1zM903,106h1v1h-1zM911,100h1v1h-1zM911,106h1v1h-1zM919,100h1v1h-1zM919,106h1v1h-1zM927,100h1v1h-1zM927,106h1v1h-1zM935,100h1v1h-1zM935,106h1v1h-1zM943,100h1v1h-1zM943,106h1v1h-1z" fill="rgb(12,12,120)" fill-opacity="0.45"/>
<rect x="156" y="119" width="793" height="1" fill="rgb(0,100,0)"/>
<path d="M157,118h1v1h-1zM158,117h1v1h-1zM157,120h1v1h-1zM158,121h1v1h-1zM165,118h1v1h-1zM166,117h1v1h-1zM165,120h1v1h-1zM166,121h1v1h-1zM173,118h1v1h-1zM174,117h1v1h-1zM173,120h1v1h-1zM174,121h1v1h-1zM181,118h1v1h-1zM182,117h1v1h-1zM181,120h1v1h-1zM182,121h1v1h-1zM189,118h1v1h-1zM190,117h1v1h-1zM189,120h1v1h-1zM190,121h1v1h-1zM197,118h1v1h-1zM198,117h1v1h-1zM197,120h1v1h-1zM198,121h1v1h-1zM205,118h1v1h-1zM206,117h1v1h-1zM205,120h1v1h-1zM206,121h1v1h-1zM213,118h1v1h-1zM214,117h1v1h-1zM213,120h1v1h-1zM214,121h1v1h-1zM221,118h1v1h-1zM222,117h1v1h-1zM221,120h1v1h-1zM222,121h1v1h-1zM229,118h1v1h-1zM230,117h1v1h-1zM229,120h1v1h-1zM230,121h1v1h-1zM237,118h1v1h-1zM238,117h1v1h-1zM237,120h1v1h-1zM238,121h1v1h-1zM245,118h1v1h-1zM246,117h1v1h-1zM245,120h1v1h-1zM246,121h1v1h-1zM253,118h1v1h-1zM254,117h1v1h-1zM253,120h1v1h-1zM254,121h1v1h-1zM261,118h1v1h-1zM262,117h1v1h-1zM261,120h1v1h-1zM262,121h1v1h-1zM269,118h1v1h-1zM270,117h1v1h-1zM269,120h1v1h-1zM270,121h1v1h-1zM277,118h1v1h-1zM278,117h1v1h-1zM277,120h1v1h-1zM278,121h1v1h-1zM285,118h1v1h-1zM286,117h1v1h-1zM285,120h1v1h-1zM286,121h1v1h-1zM293,118h1v1h-1zM294,117h1v1h-1zM293,120h1v1h-1zM294,121h1v1h-1zM301,118h1v1h-1zM302,117h1v1h-1zM301,120h1v1h-1zM302,121h1v1h-1zM309,118h1v1h-1zM310,117h1v1h-1zM309,120h1v1h-1zM310,121h1v1h-1zM317,118h1v1h-1zM318,117h1v1h-1zM317,120h1v1h-1zM318,121h1v1h-1zM325,118h1v1h-1zM326,117h1v1h-1zM325,120h1v1h-1zM326,121h1v1h-1zM333,118h1v1h-1zM334,117h1v1h-1zM333,120h1v1h-1zM334,121h1v1h-1zM341,118h1v1h-1zM342,117h1v1h-1zM341,120h1v1h-1zM342,121h1v1h-1zM349,118h1v1h-1zM350,117h1v1h-1zM349,120h1v1h-1zM350,121h1v1h-1zM357,118h1v1h-1zM358,117h1v1h-1zM357,120h1v1h-1zM358,121h1v1h-1zM365,118h1v1h-1zM366,117h1v1h-1zM365,120h1v1h-1zM366,121h1v1h-1zM373,118h1v1h-1zM374,117h1v1h-1zM373,120h1v1h-1zM374,121h1v1h-1zM381,118h1v1h-1zM382,117h1v1h-1zM381,120h1v1h-1zM382,121h1v1h-1zM389,118h1v1h-1zM390,117h1v1h-1zM389,120h1v1h-1zM390,121h1v1h-1zM397,118h1v1h-1zM398,117h1v1h-1zM397,120h1v1h-1zM398,121h1v1h-1zM405,118h1v1h-1zM406,117h1v1h-1zM405,120h1v1h-1zM406,121h1v1h-1zM413,118h1v1h-1zM414,117h1v1h-1zM413,120h1v1h-1zM414,121h1v1h-1zM421,118h1v1h-1zM422,117h1v1h-1zM421,120h1v1h-1zM422,121h1v1h-1zM429,118h1v1h-1zM430,117h1v1h-1zM429,120h1v1h-1zM430,121h1v1h-1zM437,118h1v1h-1zM438,117h1v1h-1zM437,120h1v1h-1zM438,121h1v1h-1zM445,118h1v1h-1zM446,117h1v1h-1zM445,120h1v1h-1zM446,121h1v1h-1zM453,118h1v1h-1zM454,117h1v1h-1zM453,120h1v1h-1zM454,121h1v1h-1zM461,118h1v1h-1zM462,117h1v1h-1zM461,120h1v1h-1zM462,121h1v1h-1zM469,118h1v1h-1zM470,117h1v1h-1zM469,120h1v1h-1zM470,121h1v1h-1zM477,118h1v1h-1zM478,117h1v1h-1zM477,120h1v1h-1zM478,121h1v1h-1zM485,118h1v1h-1zM486,117h1v1h-1zM485,120h1v1h-1zM486,121h1v1h-1zM493,118h1v1h-1zM494,117h1v1h-1zM493,120h1v1h-1zM494,121h1v1h-1zM501,118h1v1h-1zM502,117h1v1h-1zM501,120h1v1h-1zM502,121h1v1h-1zM509,118h1v1h-1zM510,117h1v1h-1zM509,120h1v1h-1zM510,121h1v1h-1zM517,118h1v1h-1zM518,117h1v1h-1zM517,120h1v1h-1zM518,121h1v1h-1zM525,118h1v1h-1zM526,117h1v1h-1zM525,120h1v1h-1zM526,121h1v1h-1zM533,118h1v1h-1zM534,117h1v1h-1zM533,120h1v1h-1zM534,121h1v1h-1zM541,118h1v1h-1zM542,117h1v1h-1zM541,120h1v1h-1zM542,121h1v1h-1zM549,118h1v1h-1zM550,117h1v1h-1zM549,120h1v1h-1zM550,121h1v1h-1zM557,118h1v1h-1zM558,117h1v1h-1zM557,120h1v1h-1zM558,121h1v1h-1zM565,118h1v1h-1zM566,117h1v1h-1zM565,120h1v1h-1zM566,121h1v1h-1zM573,118h1v1h-1zM574,117h1v1h-1zM573,120h1v1h-1zM574,121h1v1h-1zM581,118h1v1h-1zM582,117h1v1h-1zM581,120h1v1h-1zM582,121h1v1h-1zM589,118h1v1h-1zM590,117h1v1h-1zM589,120h1v1h-1zM590,121h1v1h-1zM597,118h1v1h-1zM598,117h1v1h-1zM597,120h1v1h-1zM598,121h1v1h-1zM605,118h1v1h-1zM606,117h1v1h-1zM605,120h1v1h-1zM606,121h1v1h-1zM613,118h1v1h-1zM614,117h1v1h-1zM613,120h1v1h-1zM614,121h1v1h-1zM621,118h1v1h-1zM622,117h1v1h-1zM621,120h1v1h-1zM622,121h1v1h-1zM629,118h1v1h-1zM630,117h1v1h-1zM629,120h1v1h-1zM630,121h1v1h-1zM637,118h1v1h-1zM638,117h1v1h-1zM637,120h1v1h-1zM638,121h1v1h-1zM645,118h1v1h-1zM646,117h1v1h-1zM645,120h1v1h-1zM646,121h1v1h-1zM653,118h1v1h-1zM654,117h1v1h-1zM653,120h1v1h-1zM654,121h1v1h-1zM661,118h1v1h-1zM662,117h1v1h-1zM661,120h1v1h-1zM662,121h1v1h-1zM669,118h1v1h-1zM670,117h1v1h-1zM669,120h1v1h-1zM670,121h1v1h-1zM677,118h1v1h-1zM678,117h1v1h-1zM677,120h1v1h-1zM678,121h1v1h-1zM685,118h1v1h-1zM686,117h1v1h-1zM685,120h1v1h-1zM686,121h1v1h-1zM693,118h1v1h-1zM694,117h1v1h-1zM693,120h1v1h-1zM694,121h1v1h-1zM701,118h1v1h-1zM702,117h1v1h-1zM701,120h1v1h-1zM702,121h1v1h-1zM709,118h1v1h-1zM710,117h1v1h-1zM709,120h1v1h-1zM710,121h1v1h-1zM717,118h1v1h-1zM718,117h1v1h-1zM717,120h1v1h-1zM718,121h1v1h-1zM725,118h1v1h-1zM726,117h1v1h-1zM725,120h1v1h-1zM726,121h1v1h-1zM733,118h1v1h-1zM734,117h1v1h-1zM733,120h1v1h-1zM734,121h1v1h-1zM741,118h1v1h-1zM742,117h1v1h-1zM741,120h1v1h-1zM742,121h1v1h-1zM749,118h1v1h-1zM750,117h1v1h-1zM749,120h1v1h-1zM750,121h1v1h-1zM757,118h1v1h-1zM758,117h1v1h-1zM757,120h1v1h-1zM758,121h1v1h-1zM765,118h1v1h-1zM766,117h1v1h-1zM765,120h1v1h-1zM766,121h1v1h-1zM773,118h1v1h-1zM774,117h1v1h-1zM773,120h1v1h-1zM774,121h1v1h-1zM781,118h1v1h-1zM782,117h1v1h-1zM781,120h1v1h-1zM782,121h1v1h-1zM789,118h1v1h-1zM790,117h1v1h-1zM789,120h1v1h-1zM790,121h1v1h-1zM797,118h1v1h-1zM798,117h1v1h-1zM797,120h1v1h-1zM798,121h1v1h-1zM805,118h1v1h-1zM806,117h1v1h-1zM805,120h1v1h-1zM806,121h1v1h-1zM813,118h1v1h-1zM814,117h1v1h-1zM813,120h1v1h-1zM814,121h1v1h-1zM821,118h1v1h-1zM822,117h1v1h-1zM821,120h1v1h-1zM822,121h1v1h-1zM829,118h1v1h-1zM830,117h1v1h-1zM829,120h1v1h-1zM830,121h1v1h-1zM837,118h1v1h-1zM838,117h1v1h-1zM837,120h1v1h-1zM838,121h1v1h-1zM845,118h1v1h-1zM846,117h1v1h-1zM845,120h1v1h-1zM846,121h1v1h-1zM853,118h1v1h-1zM854,117h1v1h-1zM853,120h1v1h-1zM854,121h1v1h-1zM861,118h1v1h-1zM862,117h1v1h-1zM861,120h1v1h-1zM862,121h1v1h-1zM869,118h1v1h-1zM870,117h1v1h-1zM869,120h1v1h-1zM870,121h1v1h-1zM877,118h1v1h-1zM878,117h1v1h-1zM877,120h1v1h-1zM878,121h1v1h-1zM885,118h1v1h-1zM886,117h1v1h-1zM885,120h1v1h-1zM886,121h1v1h-1zM893,118h1v1h-1zM894,117h1v1h-1zM893,120h1v1h-1zM894,121h1v1h-1zM901,118h1v1h-1zM902,117h1v1h-1zM901,120h1v1h-1zM902,121h1v1h-1zM909,118h1v1h-1zM910,117h1v1h-1zM909,120h1v1h-1zM910,121h1v1h-1zM917,118h1v1h-1zM918,117h1v1h-1zM917,120h1v1h-1zM918,121h1v1h-1zM925,118h1v1h-1zM926,117h1v1h-1zM925,120h1v1h-1zM926,121h1v1h-1zM933,118h1v1h-1zM934,117h1v1h-1zM933,120h1v1h-1zM934,121h1v1h-1zM941,118h1v1h-1zM942,117h1v1h-1zM941,120h1v1h-1zM942,121h1v1h-1z" fill="rgb(0,100,0)"/>
<path d="M159,116h1v1h-1zM159,122h1v1h-1zM167,116h1v1h-1zM167,122h1v1h-1zM175,116h1v1h-1zM175,122h1v1h-1zM183,116h1v1h-1zM183,122h1v1h-1zM191,116h1v1h-1zM191,122h1v1h-1zM199,116h1v1h-1zM199,122h1v1h-1zM207,116h1v1h-1zM207,122h1v1h-1zM215,116h1v1h-1zM215,122h1v1h-1zM223,116h1v1h-1zM223,122h1v1h-1zM231,116h1v1h-1zM231,122h1v1h-1zM239,116h1v1h-1zM239,122h1v1h-1zM247,116h1v1h-1zM247,122h1v1h-1zM255,116h1v1h-1zM255,122h1v1h-1zM263,116h1v1h-1zM263,122h1v1h-1zM271,116h1v1h-1zM271,122h1v1h-1zM279,116h1v1h-1zM279,122h1v1h-1zM287,116h1v1h-1zM287,122h1v1h-1zM295,116h1v1h-1zM295,122h1v1h-1zM303,116h1v1h-1zM303,122h1v1h-1zM311,116h1v1h-1zM311,122h1v1h-1zM319,116h1v1h-1zM319,122h1v1h-1zM327,116h1v1h-1zM327,122h1v1h-1zM335,116h1v1h-1zM335,122h1v1h-1zM343,116h1v1h-1zM343,122h1v1h-1zM351,116h1v1h-1zM351,122h1v1h-1zM359,116h1v1h-1zM359,122h1v1h-1zM367,116h1v1h-1zM367,122h1v1h-1zM375,116h1v1h-1zM375,122h1v1h-1zM383,116h1v1h-1zM383,122h1v1h-1zM391,116h1v1h-1zM391,122h1v1h-1zM399,116h1v1h-1zM399,122h1v1h-1zM407,116h1v1h-1zM407,122h1v1h-1zM415,116h1v1h-1zM415,122h1v1h-1zM423,116h1v1h-1zM423,122h1v1h-1zM431,116h1v1h-1zM431,122h1v1h-1zM439,116h1v1h-1zM439,122h1v1h-1zM447,116h1v1h-1zM447,122h1v1h-1zM455,116h1v1h-1zM455,122h1v1h-1zM463,116h1v1h-1zM463,122h1v1h-1zM471,116h1v1h-1zM471,122h1v1h-1zM479,116h1v1h-1zM479,122h1v1h-1zM487,116h1v1h-1zM487,122h1v1h-1zM495,116h1v1h-1zM495,122h1v1h-1zM503,116h1v1h-1zM503,122h1v1h-1zM511,116h1v1h-1zM511,122h1v1h-1zM519,116h1v1h-1zM519,122h1v1h-1zM527,116h1v1h-1zM527,122h1v1h-1zM535,116h1v1h-1zM535,122h1v1h-1zM543,116h1v1h-1zM543,122h1v1h-1zM551,116h1v1h-1zM551,122h1v1h-1zM559,116h1v1h-1zM559,122h1v1h-1zM567,116h1v1h-1zM567,122h1v1h-1zM575,116h1v1h-1zM575,122h1v1h-1zM583,116h1v1h-1zM583,122h1v1h-1zM591,116h1v1h-1zM591,122h1v1h-1zM599,116h1v1h-1zM599,122h1v1h-1zM607,116h1v1h-1zM607,122h1v1h-1zM615,116h1v1h-1zM615,122h1v1h-1zM623,116h1v1h-1zM623,122h1v1h-1zM631,116h1v1h-1zM631,122h1v1h-1zM639,116h1v1h-1zM639,122h1v1h-1zM647,116h1v1h-1zM647,122h1v1h-1zM655,116h1v1h-1zM655,122h1v1h-1zM663,116h1v1h-1zM663,122h1v1h-1zM671,116h1v1h-1zM671,122h1v1h-1zM679,116h1v1h-1zM679,122h1v1h-1zM687,116h1v1h-1zM687,122h1v1h-1zM695,116h1v1h-1zM695,122h1v1h-1zM703,116h1v1h-1zM703,122h1v1h-1zM711,116h1v1h-1zM711,122h1v1h-1zM719,116h1v1h-1zM719,122h1v1h-1zM727,116h1v1h-1zM727,122h1v1h-1zM735,116h1v1h-1zM735,122h1v1h-1zM743,116h1v1h-1zM743,122h1v1h-1zM751,116h1v1h-1zM751,122h1v1h-1zM759,116h1v1h-1zM759,122h1v1h-1zM767,116h1v1h-1zM767,122h1v1h-1zM775,116h1v1h-1zM775,122h1v1h-1zM783,116h1v1h-1zM783,122h1v1h-1zM791,116h1v1h-1zM791,122h1v1h-1zM799,116h1v1h-1zM799,122h1v1h-1zM807,116h1v1h-1zM807,122h1v1h-1zM815,116h1v1h-1zM815,122h1v1h-1zM823,116h1v1h-1zM823,122h1v1h-1zM831,116h1v1h-1zM831,122h1v1h-1zM839,116h1v1h-1zM839,122h1v1h-1zM847,116h1v1h-1zM847,122h1v1h-1zM855,116h1v1h-1zM855,122h1v1h-1zM863,116h1v1h-1zM863,122h1v1h-1zM871,116h1v1h-1zM871,122h1v1h-1zM879,116h1v1h-1zM879,122h1v1h-1zM887,116h1v1h-1zM887,122h1v1h-1zM895,116h1v1h-1zM895,122h1v1h-1zM903,116h1v1h-1zM903,122h1v1h-1zM911,116h1v1h-1zM911,122h1v1h-1zM919,116h1v1h-1zM919,122h1v1h-1zM927,116h1v1h-1zM927,122h1v1h-1zM935,116h1v1h-1zM935,122h1v1h-1zM943,116h1v1h-1zM943,122h1v1h-1z" fill="rgb(0,100,0)" fill-opacity="0.45"/>
<rect x="157" y="150" width="792" height="1" fill="rgb(12,12,120)"/>
<rect x="156" y="221" width="793" height="15" fill="rgb(0,77,0)"/>
<rect x="156" y="284" width="378" height="40" fill="#fff"/>
<rect x="156.5" y="284.5" width="377" height="40" fill="none" stroke="#f0f0f0"/>
<rect x="156" y="323" width="5" height="1" fill="#FFA54F"/>
<rect x="163" y="323" width="5" height="1" fill="#EE9A00"/>
<rect x="170" y="323" width="5" height="1" fill="#8FBC8F"/>
<rect x="177" y="322" width="5" height="2" fill="#8B1C62"/>
<rect x="184" y="323" width="5" height="1" fill="#EE6A50"/>
<rect x="191" y="323" width="5" height="1" fill="#FF0000"/>
<rect x="226" y="323" width="5" height="1" fill="#EEEE00"/>
<rect x="233" y="322" width="5" height="2" fill="#EEEE00"/>
<rect x="240" y="323" width="5" height="1" fill="#EEEE00"/>
<rect x="247" y="323" width="5" height="1" fill="#EEEE00"/>
<rect x="317" y="323" width="5" height="1" fill="#EED5D2"/>
<rect x="324" y="323" width="5" height="1" fill="#EED5D2"/>
<rect x="338" y="323" width="5" height="1" fill="#EEC591"/>
<rect x="366" y="323" width="5" height="1" fill="#EED5D2"/>
<rect x="387" y="319" width="5" height="5" fill="#CDB79E"/>
<rect x="394" y="323" width="5" height="1" fill="#CDB79E"/>
<rect x="408" y="321" width="5" height="3" fill="#9ACD32"/>
<rect x="429" y="322" width="5" height="2" fill="#FFD700"/>
<rect x="436" y="323" width="5" height="1" fill="#FFB6C1"/>
<rect x="450" y="323" width="5" height="1" fill="#B4EEB4"/>
<rect x="457" y="323" width="5" height="1" fill="#D9D9D9"/>
<rect x="464" y="285" width="5" height="39" fill="#3A5FCD"/>
<rect x="471" y="284" width="5" height="40" fill="#1E90FF"/>
<rect x="478" y="320" width="5" height="4" fill="#CDB79E"/>
<rect x="485" y="317" width="5" height="7" fill="#CDB79E"/>
<rect x="492" y="314" width="5" height="10" fill="#FFD39B"/>
<rect x="499" y="313" width="5" height="11" fill="#A6A6A6"/>
<rect x="506" y="323" width="5" height="1" fill="#008B45"/>
<rect x="513" y="323" width="5" height="1" fill="#EED5D2"/>
<rect x="520" y="322" width="5" height="2" fill="#EED5D2"/>
<rect x="527" y="307" width="5" height="17" fill="#FF00FF"/>
<rect x="156" y="324" width="378" height="1" fill="#e4e4e4"/>
<rect x="156" y="325" width="793" height="2" fill="rgb(0,0,120)"/>
<rect x="156" y="347" width="793" height="23" fill="rgb(128,208,255)"/>
<rect x="156" y="370" width="793" height="3" fill="rgb(128,176,128)"/>
<rect x="156" y="373" width="793" height="1" fill="rgb(128,32,32)"/>
<rect x="168.00" y="414.00" width="6.50" height="2.00" fill="#aca21a" fill-opacity="0.85"/>
<rect x="174.50" y="414.00" width="23.50" height="2.00" fill="#aca21a" fill-opacity="0.3"/>
<rect x="198.00" y="414.00" width="6.00" height="2.00" fill="#aca21a" fill-opacity="0.6"/>
<rect x="204.00" y="414.60" width="3.00" height="1.20" fill="#aca21a" fill-opacity="0.4"/>
<rect x="232.00" y="414.00" width="37.80" height="1.00" fill="#00ee00" fill-opacity="0.3"/>
<rect x="248.00" y="414.00" width="6.00" height="2.00" fill="#00ee00" fill-opacity="1"/>
<rect x="300.50" y="414.00" width="7.00" height="2.00" fill="#0000ff" fill-opacity="0.75"/>
<rect x="307.50" y="414.00" width="28.50" height="2.00" fill="#0000ff" fill-opacity="0.28"/>
<rect x="332.00" y="414.40" width="4.00" height="1.40" fill="#0000ff" fill-opacity="0.45"/>
<rect x="336.00" y="415.00" width="7.00" height="1.30" fill="#0000ff" fill-opacity="0.95"/>
<rect x="366.20" y="414.00" width="7.00" height="2.00" fill="#0000ff" fill-opacity="0.75"/>
<rect x="373.20" y="414.00" width="28.70" height="2.00" fill="#0000ff" fill-opacity="0.28"/>
<rect x="397.90" y="414.40" width="4.00" height="1.40" fill="#0000ff" fill-opacity="0.45"/>
<rect x="401.90" y="415.00" width="7.00" height="1.30" fill="#0000ff" fill-opacity="0.95"/>
<rect x="431.00" y="415.00" width="9.46" height="1.30" fill="#ff0000" fill-opacity="0.75"/>
<rect x="440.46" y="414.50" width="3.15" height="1.30" fill="#ff0000" fill-opacity="0.5"/>
<rect x="443.61" y="414.00" width="14.18" height="1.30" fill="#ff0000" fill-opacity="0.7"/>
<rect x="457.79" y="414.50" width="3.15" height="1.30" fill="#ff0000" fill-opacity="0.5"/>
<rect x="460.94" y="415.00" width="9.46" height="1.30" fill="#ff0000" fill-opacity="0.75"/>
<rect x="496.80" y="415.00" width="9.50" height="1.30" fill="#ff0000" fill-opacity="0.75"/>
<rect x="506.30" y="414.50" width="3.17" height="1.30" fill="#ff0000" fill-opacity="0.5"/>
<rect x="509.47" y="414.00" width="14.26" height="1.30" fill="#ff0000" fill-opacity="0.7"/>
<rect x="523.73" y="414.50" width="3.17" height="1.30" fill="#ff0000" fill-opacity="0.5"/>
<rect x="526.90" y="415.00" width="9.50" height="1.30" fill="#ff0000" fill-opacity="0.75"/>
<rect x="562.00" y="416.00" width="37.80" height="1.00" fill="#00ee00" fill-opacity="0.3"/>
<rect x="578.00" y="416.00" width="6.00" height="2.00" fill="#00ee00" fill-opacity="1"/>
<rect x="628.00" y="414.00" width="37.00" height="1.00" fill="#00ee00" fill-opacity="0.3"/>
<rect x="644.00" y="414.00" width="6.00" height="2.00" fill="#00ee00" fill-opacity="1"/>
<rect x="694.70" y="414.00" width="36.30" height="1.00" fill="#00ee00" fill-opacity="0.3"/>
<rect x="710.00" y="414.00" width="6.00" height="2.00" fill="#00ee00" fill-opacity="1"/>
<rect x="762.50" y="416.00" width="6.50" height="2.00" fill="#aca21a" fill-opacity="0.85"/>
<rect x="769.00" y="416.00" width="24.20" height="2.00" fill="#aca21a" fill-opacity="0.3"/>
<rect x="793.20" y="416.00" width="6.00" height="2.00" fill="#aca21a" fill-opacity="0.6"/>
<rect x="799.20" y="416.60" width="3.00" height="1.20" fill="#aca21a" fill-opacity="0.4"/>
<rect x="829.00" y="416.00" width="6.50" height="2.00" fill="#aca21a" fill-opacity="0.85"/>
<rect x="835.50" y="416.00" width="23.50" height="2.00" fill="#aca21a" fill-opacity="0.3"/>
<rect x="859.00" y="416.00" width="6.00" height="2.00" fill="#aca21a" fill-opacity="0.6"/>
<rect x="865.00" y="416.60" width="3.00" height="1.20" fill="#aca21a" fill-opacity="0.4"/>
<rect x="894.70" y="414.00" width="6.50" height="2.00" fill="#aca21a" fill-opacity="0.85"/>
<rect x="901.20" y="414.00" width="23.70" height="2.00" fill="#aca21a" fill-opacity="0.3"/>
<rect x="924.90" y="414.00" width="6.00" height="2.00" fill="#aca21a" fill-opacity="0.6"/>
<rect x="930.90" y="414.60" width="3.00" height="1.20" fill="#aca21a" fill-opacity="0.4"/>
<text x="187.8" y="483" fill="rgb(12,12,120)" font-size="13" text-anchor="middle" transform="matrix(1,0,0,1.1,0,-48.300)">C</text>
<text x="187.8" y="498" fill="rgb(12,12,120)" font-size="13" text-anchor="middle" transform="matrix(1,0,0,1.1,0,-49.800)">C</text>
<text x="187.3" y="514" fill="rgb(85,85,150)" font-size="13" text-anchor="middle" transform="matrix(1,0,0,1.05,0,-25.700)">=</text>
<text x="187.3" y="529" fill="rgb(85,85,150)" font-size="13" text-anchor="middle" transform="matrix(1,0,0,1.05,0,-26.450)">=</text>
<text x="187.8" y="543" fill="rgb(85,85,150)" font-size="13" text-anchor="middle" transform="matrix(1,0,0,1.05,0,-27.150)">-</text>
<text x="253.8" y="483" fill="rgb(12,12,120)" font-size="13" text-anchor="middle" transform="matrix(1,0,0,1.1,0,-48.300)">T</text>
<text x="253.8" y="498" fill="rgb(12,12,120)" font-size="13" text-anchor="middle" transform="matrix(1,0,0,1.1,0,-49.800)">T</text>
<text x="253.3" y="514" fill="rgb(85,85,150)" font-size="13" text-anchor="middle" transform="matrix(1,0,0,1.05,0,-25.700)">=</text>
<text x="253.3" y="529" fill="rgb(85,85,150)" font-size="13" text-anchor="middle" transform="matrix(1,0,0,1.05,0,-26.450)">=</text>
<text x="253.8" y="543" fill="rgb(85,85,150)" font-size="13" text-anchor="middle" transform="matrix(1,0,0,1.05,0,-27.150)">-</text>
<text x="319.8" y="483" fill="rgb(12,12,120)" font-size="13" text-anchor="middle" transform="matrix(1,0,0,1.1,0,-48.300)">G</text>
<text x="319.8" y="498" fill="rgb(12,12,120)" font-size="13" text-anchor="middle" transform="matrix(1,0,0,1.1,0,-49.800)">G</text>
<text x="319.3" y="514" fill="rgb(85,85,150)" font-size="13" text-anchor="middle" transform="matrix(1,0,0,1.05,0,-25.700)">=</text>
<text x="319.3" y="529" fill="rgb(85,85,150)" font-size="13" text-anchor="middle" transform="matrix(1,0,0,1.05,0,-26.450)">=</text>
<text x="319.8" y="543" fill="rgb(85,85,150)" font-size="13" text-anchor="middle" transform="matrix(1,0,0,1.05,0,-27.150)">-</text>
<text x="385.8" y="483" fill="rgb(12,12,120)" font-size="13" text-anchor="middle" transform="matrix(1,0,0,1.1,0,-48.300)">G</text>
<text x="385.8" y="498" fill="rgb(12,12,120)" font-size="13" text-anchor="middle" transform="matrix(1,0,0,1.1,0,-49.800)">G</text>
<text x="385.3" y="514" fill="rgb(85,85,150)" font-size="13" text-anchor="middle" transform="matrix(1,0,0,1.05,0,-25.700)">=</text>
<text x="385.3" y="529" fill="rgb(85,85,150)" font-size="13" text-anchor="middle" transform="matrix(1,0,0,1.05,0,-26.450)">=</text>
<text x="385.8" y="543" fill="rgb(85,85,150)" font-size="13" text-anchor="middle" transform="matrix(1,0,0,1.05,0,-27.150)">-</text>
<text x="451.8" y="483" fill="rgb(12,12,120)" font-size="13" text-anchor="middle" transform="matrix(1,0,0,1.1,0,-48.300)">A</text>
<text x="451.8" y="498" fill="rgb(12,12,120)" font-size="13" text-anchor="middle" transform="matrix(1,0,0,1.1,0,-49.800)">A</text>
<text x="451.3" y="514" fill="rgb(85,85,150)" font-size="13" text-anchor="middle" transform="matrix(1,0,0,1.05,0,-25.700)">=</text>
<text x="451.3" y="529" fill="rgb(85,85,150)" font-size="13" text-anchor="middle" transform="matrix(1,0,0,1.05,0,-26.450)">=</text>
<text x="451.8" y="543" fill="rgb(85,85,150)" font-size="13" text-anchor="middle" transform="matrix(1,0,0,1.05,0,-27.150)">-</text>
<text x="517.8" y="483" fill="rgb(12,12,120)" font-size="13" text-anchor="middle" transform="matrix(1,0,0,1.1,0,-48.300)">A</text>
<text x="517.8" y="498" fill="rgb(12,12,120)" font-size="13" text-anchor="middle" transform="matrix(1,0,0,1.1,0,-49.800)">A</text>
<text x="517.3" y="514" fill="rgb(85,85,150)" font-size="13" text-anchor="middle" transform="matrix(1,0,0,1.05,0,-25.700)">=</text>
<text x="517.3" y="529" fill="rgb(85,85,150)" font-size="13" text-anchor="middle" transform="matrix(1,0,0,1.05,0,-26.450)">=</text>
<text x="517.8" y="543" fill="rgb(85,85,150)" font-size="13" text-anchor="middle" transform="matrix(1,0,0,1.05,0,-27.150)">-</text>
<text x="583.8" y="483" fill="rgb(12,12,120)" font-size="13" text-anchor="middle" transform="matrix(1,0,0,1.1,0,-48.300)">C</text>
<text x="583.8" y="498" fill="#9a9ab8" font-size="13" text-anchor="middle" transform="matrix(1,0,0,1.1,0,-49.800)">T</text>
<text x="583.3" y="514" fill="rgb(85,85,150)" font-size="13" text-anchor="middle" transform="matrix(1,0,0,1.05,0,-25.700)">=</text>
<text x="583.3" y="529" fill="rgb(85,85,150)" font-size="13" text-anchor="middle" transform="matrix(1,0,0,1.05,0,-26.450)">=</text>
<text x="583.8" y="543" fill="rgb(85,85,150)" font-size="13" text-anchor="middle" transform="matrix(1,0,0,1.05,0,-27.150)">-</text>
<text x="649.8" y="483" fill="rgb(12,12,120)" font-size="13" text-anchor="middle" transform="matrix(1,0,0,1.1,0,-48.300)">T</text>
<text x="649.8" y="498" fill="rgb(12,12,120)" font-size="13" text-anchor="middle" transform="matrix(1,0,0,1.1,0,-49.800)">T</text>
<text x="649.3" y="514" fill="rgb(85,85,150)" font-size="13" text-anchor="middle" transform="matrix(1,0,0,1.05,0,-25.700)">=</text>
<text x="649.3" y="529" fill="rgb(85,85,150)" font-size="13" text-anchor="middle" transform="matrix(1,0,0,1.05,0,-26.450)">=</text>
<text x="649.8" y="543" fill="rgb(85,85,150)" font-size="13" text-anchor="middle" transform="matrix(1,0,0,1.05,0,-27.150)">-</text>
<text x="715.8" y="483" fill="rgb(12,12,120)" font-size="13" text-anchor="middle" transform="matrix(1,0,0,1.1,0,-48.300)">T</text>
<text x="715.8" y="498" fill="rgb(12,12,120)" font-size="13" text-anchor="middle" transform="matrix(1,0,0,1.1,0,-49.800)">T</text>
<text x="715.3" y="514" fill="rgb(85,85,150)" font-size="13" text-anchor="middle" transform="matrix(1,0,0,1.05,0,-25.700)">=</text>
<text x="715.3" y="529" fill="rgb(85,85,150)" font-size="13" text-anchor="middle" transform="matrix(1,0,0,1.05,0,-26.450)">=</text>
<text x="715.8" y="543" fill="rgb(85,85,150)" font-size="13" text-anchor="middle" transform="matrix(1,0,0,1.05,0,-27.150)">-</text>
<text x="781.8" y="483" fill="rgb(12,12,120)" font-size="13" text-anchor="middle" transform="matrix(1,0,0,1.1,0,-48.300)">C</text>
<text x="781.8" y="498" fill="rgb(12,12,120)" font-size="13" text-anchor="middle" transform="matrix(1,0,0,1.1,0,-49.800)">C</text>
<text x="781.3" y="514" fill="rgb(85,85,150)" font-size="13" text-anchor="middle" transform="matrix(1,0,0,1.05,0,-25.700)">=</text>
<text x="781.3" y="529" fill="rgb(85,85,150)" font-size="13" text-anchor="middle" transform="matrix(1,0,0,1.05,0,-26.450)">=</text>
<text x="781.8" y="543" fill="rgb(85,85,150)" font-size="13" text-anchor="middle" transform="matrix(1,0,0,1.05,0,-27.150)">-</text>
<text x="847.8" y="483" fill="rgb(12,12,120)" font-size="13" text-anchor="middle" transform="matrix(1,0,0,1.1,0,-48.300)">C</text>
<text x="847.8" y="498" fill="rgb(12,12,120)" font-size="13" text-anchor="middle" transform="matrix(1,0,0,1.1,0,-49.800)">C</text>
<text x="847.3" y="514" fill="rgb(85,85,150)" font-size="13" text-anchor="middle" transform="matrix(1,0,0,1.05,0,-25.700)">=</text>
<text x="847.3" y="529" fill="rgb(85,85,150)" font-size="13" text-anchor="middle" transform="matrix(1,0,0,1.05,0,-26.450)">=</text>
<text x="847.8" y="543" fill="rgb(85,85,150)" font-size="13" text-anchor="middle" transform="matrix(1,0,0,1.05,0,-27.150)">-</text>
<text x="913.8" y="483" fill="rgb(12,12,120)" font-size="13" text-anchor="middle" transform="matrix(1,0,0,1.1,0,-48.300)">C</text>
<text x="913.8" y="498" fill="rgb(12,12,120)" font-size="13" text-anchor="middle" transform="matrix(1,0,0,1.1,0,-49.800)">C</text>
<text x="913.3" y="514" fill="rgb(85,85,150)" font-size="13" text-anchor="middle" transform="matrix(1,0,0,1.05,0,-25.700)">=</text>
<text x="913.3" y="529" fill="rgb(85,85,150)" font-size="13" text-anchor="middle" transform="matrix(1,0,0,1.05,0,-26.450)">=</text>
<text x="913.8" y="543" fill="rgb(85,85,150)" font-size="13" text-anchor="middle" transform="matrix(1,0,0,1.05,0,-27.150)">-</text>
<rect x="156" y="606" width="793" height="15" fill="#000"/>
<text x="56.25" y="13" fill="#000" font-size="13" textLength="96.46" lengthAdjust="spacingAndGlyphs" xml:space="preserve" transform="matrix(1,0,0,1.05,0,-0.650)">Window Position</text>
<text x="118.15" y="30" fill="#000" font-size="13" textLength="34.21" lengthAdjust="spacingAndGlyphs" xml:space="preserve" transform="matrix(1,0,0,1.05,0,-1.500)">Scale</text>
<text x="123.10" y="47" fill="#000" font-size="13" textLength="28.80" lengthAdjust="spacingAndGlyphs" xml:space="preserve">chr6:</text>
<text x="101.88" y="92" fill="rgb(12,12,120)" font-size="13" textLength="48.20" lengthAdjust="spacingAndGlyphs" xml:space="preserve" transform="matrix(1,0,0,1.05,0,-4.600)">PNPLA1</text>
<text x="101.88" y="108" fill="rgb(12,12,120)" font-size="13" textLength="48.20" lengthAdjust="spacingAndGlyphs" xml:space="preserve" transform="matrix(1,0,0,1.05,0,-5.400)">PNPLA1</text>
<text x="37.92" y="124" fill="rgb(0,100,0)" font-size="13" textLength="114.05" lengthAdjust="spacingAndGlyphs" xml:space="preserve" transform="matrix(1,0,0,1.05,0,-6.200)">ENSG00000303658</text>
<text x="59.71" y="155" fill="rgb(12,12,120)" font-size="13" textLength="92.12" lengthAdjust="spacingAndGlyphs" xml:space="preserve" transform="matrix(1,0,0,1.05,0,-7.750)">RefSeq Curated</text>
<text x="86.40" y="186" fill="#000" font-size="13" textLength="65.27" lengthAdjust="spacingAndGlyphs" xml:space="preserve" transform="matrix(1,0,0,1.05,0,-9.300)">Sequences</text>
<text x="117.48" y="202" fill="#000" font-size="13" textLength="33.75" lengthAdjust="spacingAndGlyphs" xml:space="preserve" transform="matrix(1,0,0,1.05,0,-10.100)">SNPs</text>
<text x="74.20" y="233" fill="rgb(0,100,0)" font-size="13" textLength="77.70" lengthAdjust="spacingAndGlyphs" xml:space="preserve" transform="matrix(1,0,0,1.05,0,-11.650)">OMIM Genes</text>
<text x="26.50" y="264" fill="#000" font-size="13" textLength="125.88" lengthAdjust="spacingAndGlyphs" xml:space="preserve" transform="matrix(1,0,0,1.05,0,-13.200)">Common dbSNP(155)</text>
<text x="101.93" y="311" fill="#000" font-size="13" textLength="48.14" lengthAdjust="spacingAndGlyphs" xml:space="preserve" transform="matrix(1,0,0,1.05,0,-15.550)">PNPLA1</text>
<text x="12.71" y="356" fill="#000" font-size="13" textLength="104.81" lengthAdjust="spacingAndGlyphs" xml:space="preserve" transform="matrix(1,0,0,1.05,0,-17.800)">Layered H3K27Ac</text>
<text x="12.79" y="412" fill="rgb(60,60,140)" font-size="13" textLength="86.61" lengthAdjust="spacingAndGlyphs" xml:space="preserve" transform="matrix(1,0,0,1.05,0,-20.600)">100 Vert. Cons</text>
<text x="116.20" y="387" fill="rgb(60,60,140)" font-size="13" textLength="24.91" lengthAdjust="spacingAndGlyphs" xml:space="preserve" transform="matrix(1,0,0,1.05,0,-19.350)">4.88</text>
<text x="119.50" y="437" fill="rgb(140,60,60)" font-size="13" textLength="21.49" lengthAdjust="spacingAndGlyphs" xml:space="preserve" transform="matrix(1,0,0,1.05,0,-21.850)">-4.5</text>
<text x="121.20" y="468" fill="rgb(225,130,30)" font-size="13" textLength="30.38" lengthAdjust="spacingAndGlyphs" xml:space="preserve" transform="matrix(1,0,0,1.05,0,-23.400)">Gaps</text>
<text x="109.98" y="483" fill="rgb(12,12,120)" font-size="13" textLength="42.55" lengthAdjust="spacingAndGlyphs" xml:space="preserve" transform="matrix(1,0,0,1.1,0,-48.300)">Human</text>
<text x="107.60" y="498" fill="rgb(12,12,120)" font-size="13" textLength="43.98" lengthAdjust="spacingAndGlyphs" xml:space="preserve" transform="matrix(1,0,0,1.1,0,-49.800)">Rhesus</text>
<text x="112.60" y="513" fill="rgb(0,100,0)" font-size="13" textLength="39.03" lengthAdjust="spacingAndGlyphs" xml:space="preserve" transform="matrix(1,0,0,1.05,0,-25.650)">Mouse</text>
<text x="128.60" y="528" fill="rgb(12,12,120)" font-size="13" textLength="23.86" lengthAdjust="spacingAndGlyphs" xml:space="preserve" transform="matrix(1,0,0,1.05,0,-26.400)">Dog</text>
<text x="100.29" y="543" fill="rgb(0,100,0)" font-size="13" textLength="51.64" lengthAdjust="spacingAndGlyphs" xml:space="preserve" transform="matrix(1,0,0,1.05,0,-27.150)">Elephant</text>
<text x="105.20" y="558" fill="rgb(0,100,0)" font-size="13" textLength="47.38" lengthAdjust="spacingAndGlyphs" xml:space="preserve" transform="matrix(1,0,0,1.05,0,-27.900)">Chicken</text>
<text x="84.20" y="573" fill="rgb(12,12,120)" font-size="13" textLength="67.50" lengthAdjust="spacingAndGlyphs" xml:space="preserve" transform="matrix(1,0,0,1.05,0,-28.650)">X_tropicalis</text>
<text x="98.00" y="588" fill="rgb(0,100,0)" font-size="13" textLength="53.80" lengthAdjust="spacingAndGlyphs" xml:space="preserve" transform="matrix(1,0,0,1.05,0,-29.400)">Zebrafish</text>
<text x="67.40" y="618" fill="#000" font-size="13" textLength="84.14" lengthAdjust="spacingAndGlyphs" xml:space="preserve" transform="matrix(1,0,0,1.05,0,-30.900)">RepeatMasker</text>
<text x="132.20" y="62" fill="#000" font-size="13" textLength="19.36" lengthAdjust="spacingAndGlyphs" xml:space="preserve" transform="matrix(1,0,0,1.05,0,-3.100)">---&gt;</text>
<text x="345.92" y="12" fill="#000" font-size="13" textLength="195.93" lengthAdjust="spacingAndGlyphs" xml:space="preserve" transform="matrix(1,0,0,1.05,0,-0.600)">Human Feb. 2009 (GRCh37/hg19)</text>
<text x="554.30" y="12" fill="#000" font-size="13" textLength="203.87" lengthAdjust="spacingAndGlyphs" xml:space="preserve" transform="matrix(1,0,0,1.05,0,-0.600)">chr6:36,213,235-36,213,246 (12 bp)</text>
<text x="432.40" y="78" fill="#000" font-size="13" textLength="239.42" lengthAdjust="spacingAndGlyphs" xml:space="preserve" transform="matrix(1,0,0,1.05,0,-3.900)">GENCODE V49lift37 (1 items filtered out)</text>
<text x="490.60" y="140" fill="#000" font-size="11" textLength="124.02" lengthAdjust="spacingAndGlyphs" xml:space="preserve">RefSeq genes from NCBI</text>
<text x="444.52" y="171" fill="#000" font-size="11" textLength="214.16" lengthAdjust="spacingAndGlyphs" xml:space="preserve">Publications: Sequences in Scientific Articles</text>
<text x="368.20" y="219" fill="rgb(0,80,0)" font-size="13" textLength="369.12" lengthAdjust="spacingAndGlyphs" xml:space="preserve" transform="matrix(1,0,0,1.05,0,-10.950)">OMIM Gene Phenotypes - Dark Green Can Be Disease-causing</text>
<text x="435.00" y="249" fill="#000" font-size="11" textLength="233.07" lengthAdjust="spacingAndGlyphs" xml:space="preserve">Short Genetic Variants from dbSNP release 155</text>
<text x="266.30" y="281" fill="#000" font-size="13" textLength="571.55" lengthAdjust="spacingAndGlyphs" xml:space="preserve" transform="matrix(1,0,0,1.05,0,-14.050)">Gene Expression in 54 tissues from GTEx RNA-seq of 17382 samples, 948 donors (V8, Aug 2019)</text>
<text x="280.59" y="342" fill="#000" font-size="13" textLength="542.06" lengthAdjust="spacingAndGlyphs" xml:space="preserve" transform="matrix(1,0,0,1.05,0,-17.100)">H3K27Ac Mark (Often Found Near Active Regulatory Elements) on 7 cell lines from ENCODE</text>
<text x="404.99" y="388" fill="rgb(60,60,140)" font-size="13" textLength="293.85" lengthAdjust="spacingAndGlyphs" xml:space="preserve" transform="matrix(1,0,0,1.05,0,-19.400)">100 vertebrates Basewise Conservation by PhyloP</text>
<text x="444.78" y="454" fill="rgb(10,10,100)" font-size="13" textLength="214.43" lengthAdjust="spacingAndGlyphs" xml:space="preserve" transform="matrix(1,0,0,1.05,0,-22.700)">Multiz Alignments of 100 Vertebrates</text>
<text x="440.80" y="604" fill="#000" font-size="13" textLength="222.66" lengthAdjust="spacingAndGlyphs" xml:space="preserve" transform="matrix(1,0,0,1.05,0,-30.200)">Repeating Elements by RepeatMasker</text>
</svg></body></html>
